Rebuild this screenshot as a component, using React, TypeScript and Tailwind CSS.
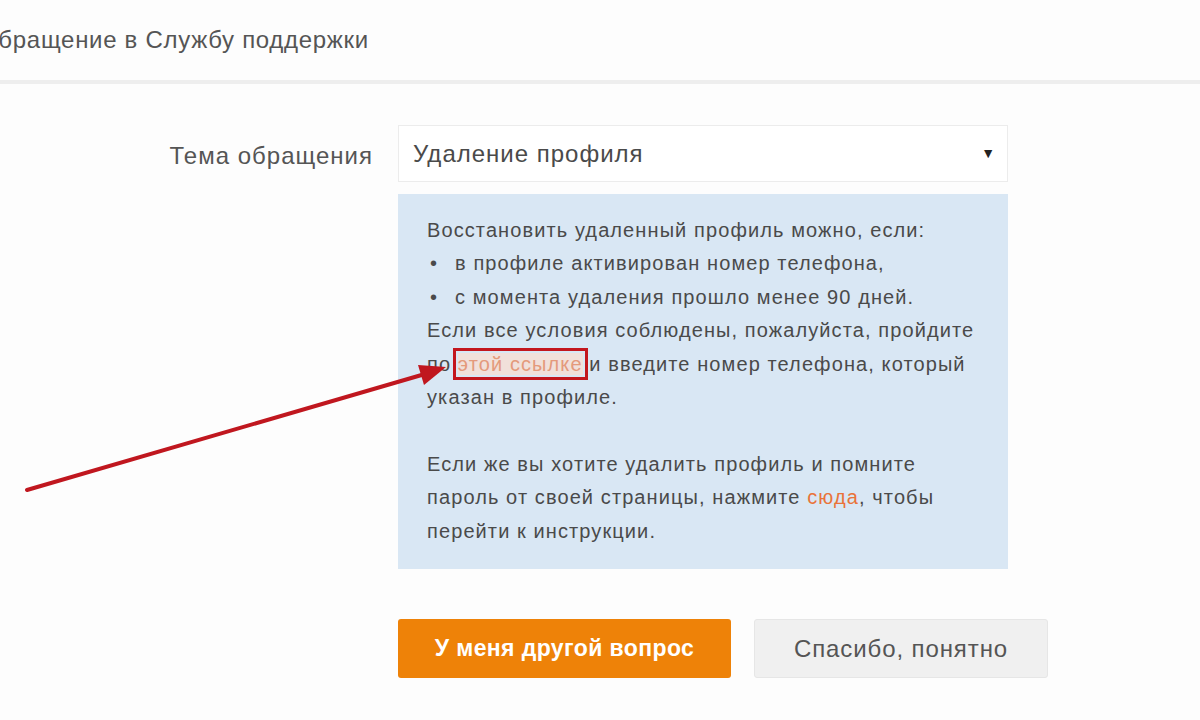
import React from "react";

export default function App() {
  return (
    <div
      className="relative w-[1200px] h-[720px] overflow-hidden bg-[#fdfdfd] text-[#4d4d4d]"
      style={{ fontFamily: '"Liberation Sans", Arial, sans-serif' }}
    >
      <div className="h-[84px] flex items-center border-b-[4px] border-[#eeeeee]">
        <div className="-ml-[21px] text-[24px] tracking-[0.7px] text-[#555]">Обращение в Службу поддержки</div>
      </div>

      <div className="flex mt-[41px]">
        <div className="w-[373px] shrink-0 flex justify-end items-start pt-[13px] text-[24px] tracking-[1px] text-[#555]">
          Тема обращения
        </div>
        <div className="ml-[25px] w-[610px] shrink-0 flex flex-col">
          <div className="h-[57px] bg-white border border-[#ececec] flex items-center justify-between pl-[14px] pr-[11px] text-[24px] tracking-[1px] text-[#4a4a4a]">
            <span>Удаление профиля</span>
            <span className="text-[14px] text-[#222]">▼</span>
          </div>
          <div className="mt-[12px] bg-[#d9e7f4] pl-[29px] pr-[22px] pt-[20px] pb-[21px] text-[20px] tracking-[1.1px] leading-[33.4px] text-[#4a4a4a]">
            <div>Восстановить удаленный профиль можно, если:</div>
            <div className="flex">
              <span className="w-[28px] pl-[3px]">•</span>
              <span>в профиле активирован номер телефона,</span>
            </div>
            <div className="flex">
              <span className="w-[28px] pl-[3px]">•</span>
              <span>с момента удаления прошло менее 90 дней.</span>
            </div>
            <div>
              Если все условия соблюдены, пожалуйста, пройдите по{" "}
              <span className="text-[#e49a7c] bg-[#f1e0da] outline-[3px] outline-solid outline-[#c3161d] outline-offset-[2px]">
                этой ссылке
              </span>{" "}
              и введите номер телефона, который указан в профиле.
            </div>
            <div className="h-[33.4px]" />
            <div>
              Если же вы хотите удалить профиль и помните пароль от своей страницы, нажмите{" "}
              <span className="text-[#e9733a]">сюда</span>, чтобы перейти к инструкции.
            </div>
          </div>
          <div className="mt-[50px] flex gap-[23px]">
            <div className="w-[333px] h-[59px] shrink-0 rounded-[3px] bg-[#ee8208] flex items-center justify-center text-white font-bold text-[23px] tracking-[0.4px]">
              У меня другой вопрос
            </div>
            <div className="w-[294px] h-[59px] shrink-0 rounded-[3px] bg-[#f0f0f0] border border-[#e6e6e6] flex items-center justify-center text-[#555] text-[24px] tracking-[0.9px]">
              Спасибо, понятно
            </div>
          </div>
        </div>
      </div>

      <svg className="absolute left-0 top-0 pointer-events-none" width="1200" height="720">
        <line x1="27" y1="490" x2="425" y2="374" stroke="#c0171f" strokeWidth="4" strokeLinecap="round" />
        <polygon points="446,367 418,365 424,385" fill="#c0171f" />
      </svg>
    </div>
  );
}
